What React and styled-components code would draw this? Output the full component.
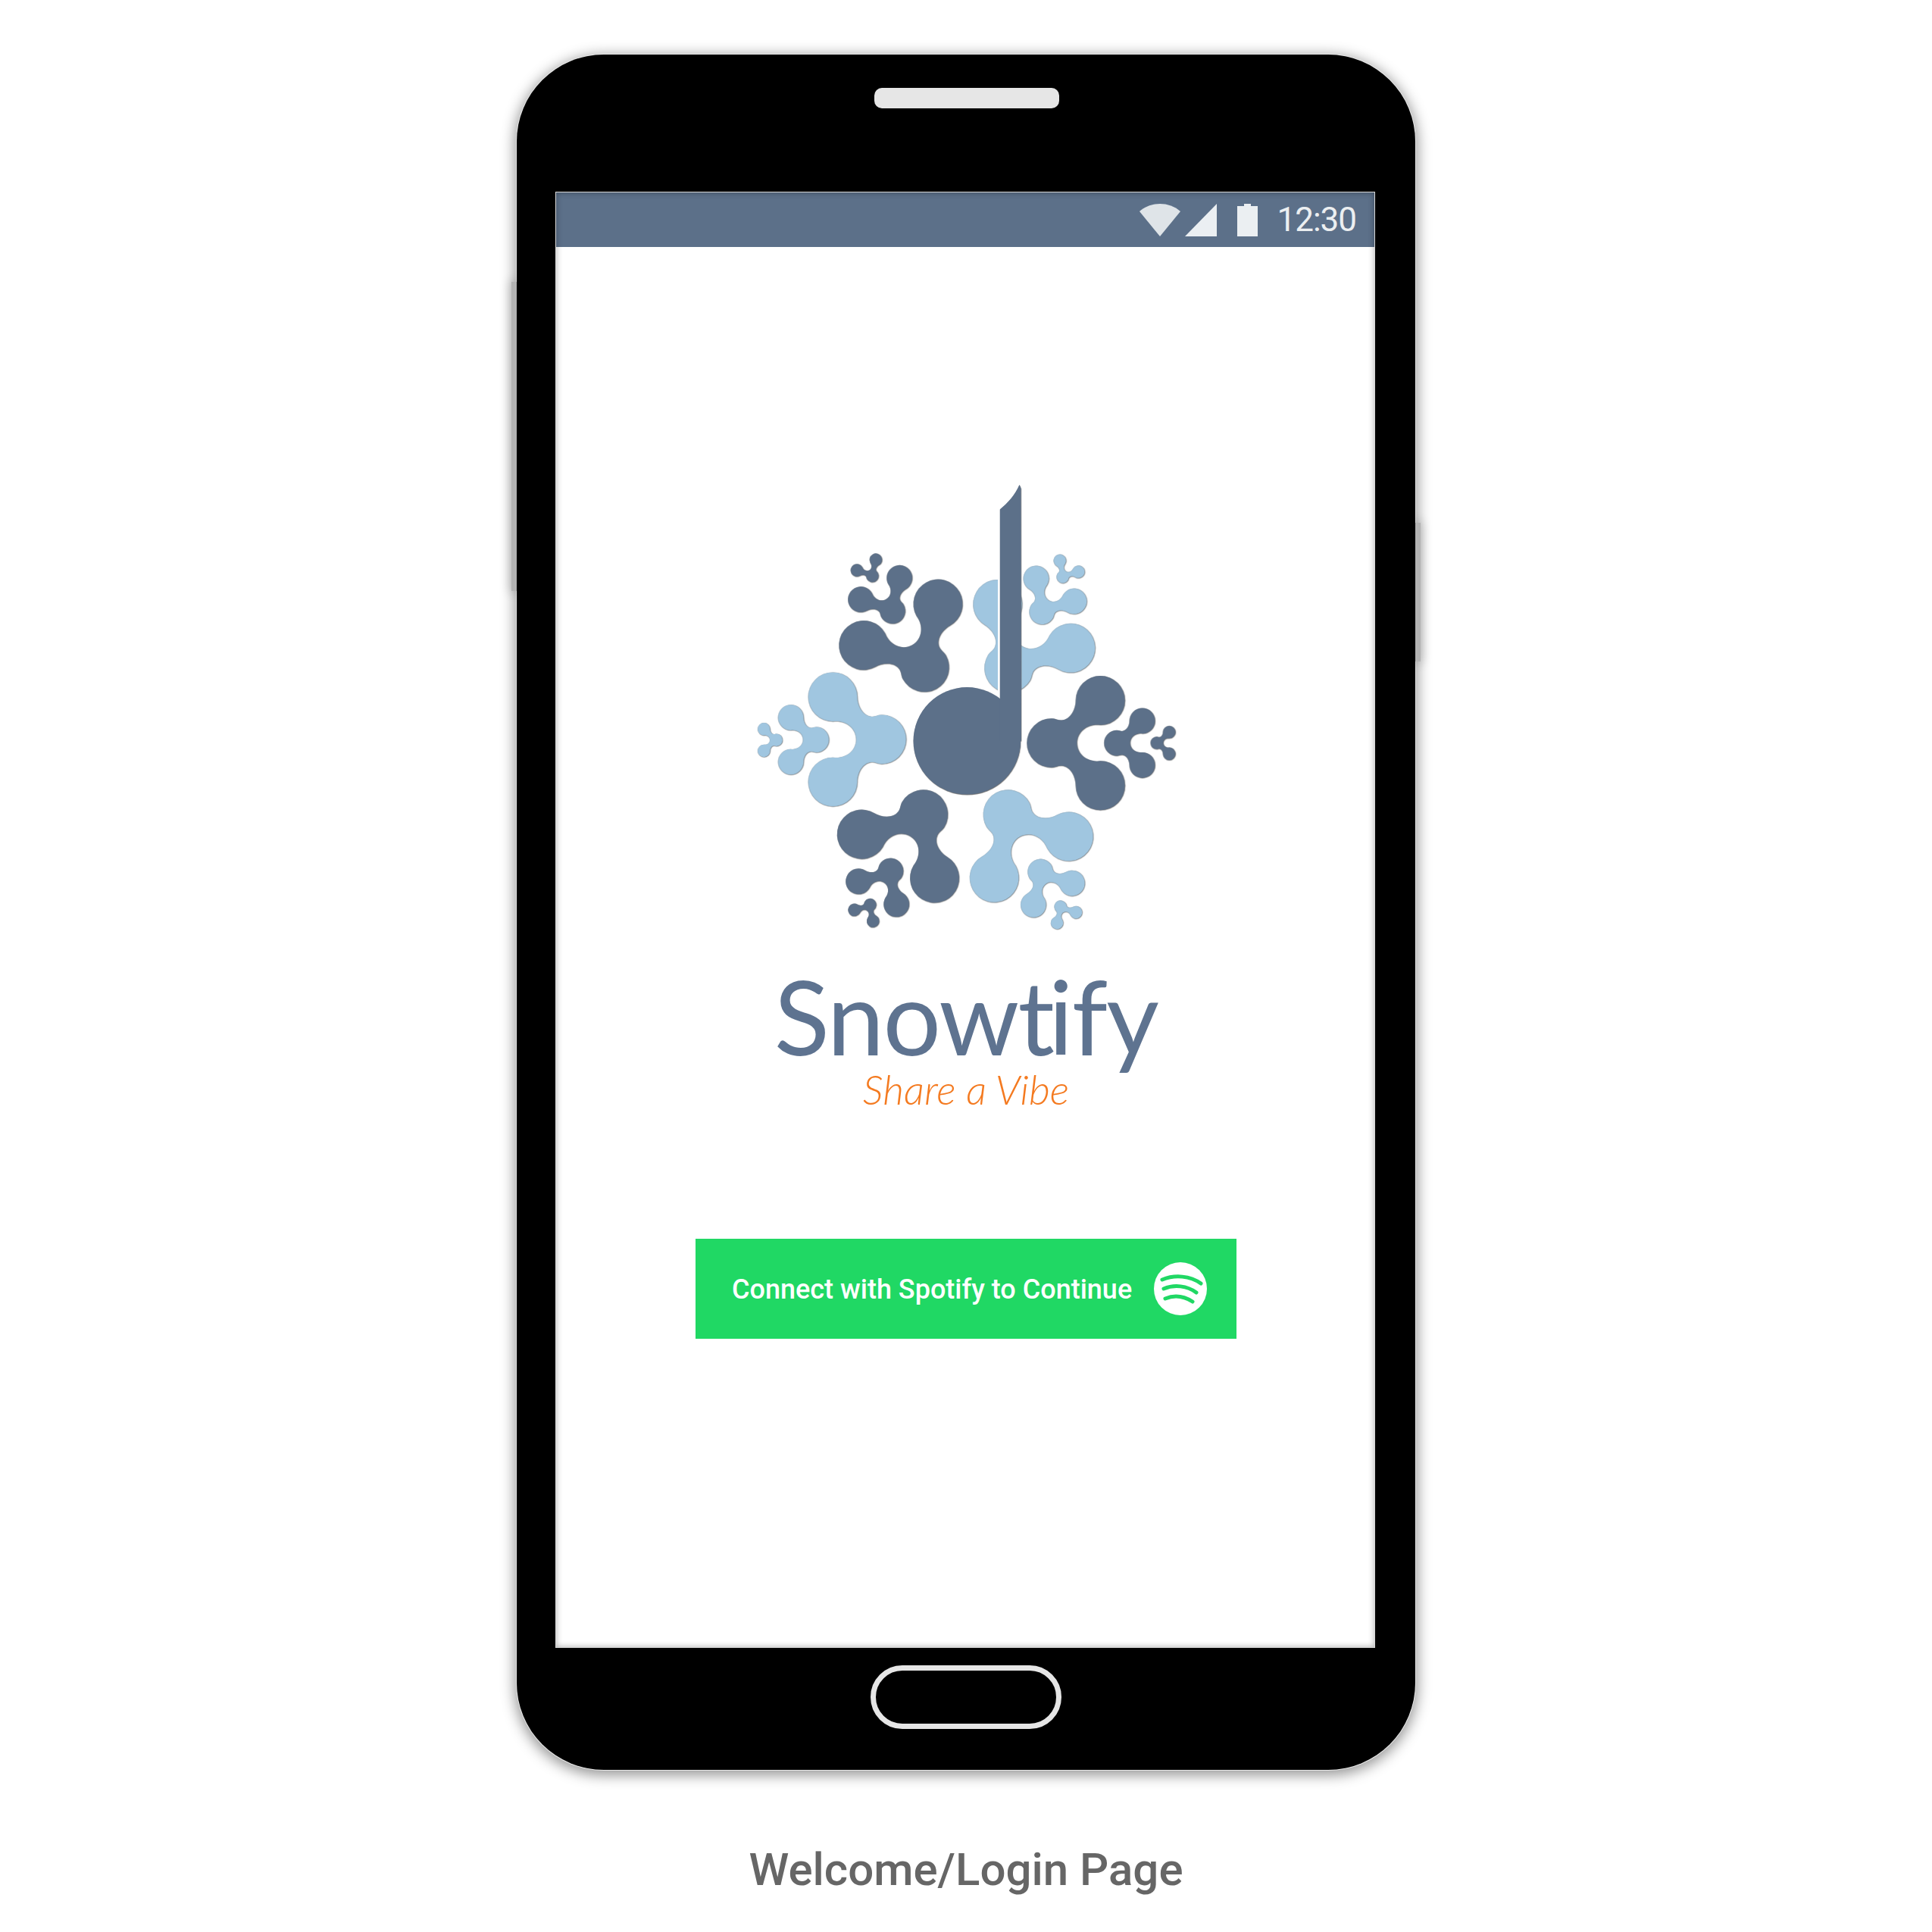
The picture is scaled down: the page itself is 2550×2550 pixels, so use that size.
import styled, { createGlobalStyle } from "styled-components";

const SLATE = "#5c7089";
const SKY = "#a0c6e0";

// one three-lobed blob, lobes on x=0 and the third lobe pointing along +x
const BLOB_PATH =
    "M0 -224 A82 82 0 0 1 82 -142 C82 -115 98 -78 130 -76 C143 -76 150 -82 163 -82 " +
    "A82 82 0 0 1 163 82 C150 82 143 76 130 76 C98 78 82 115 82 142 " +
    "A82 82 0 1 1 0 60 C40 66 78 40 78 0 C78 -40 40 -66 0 -60 A82 82 0 1 1 0 -224 Z";

// x, y = middle of the two outer lobes, in logo units
const arms = [
    { color: SKY, angle: 0, parts: [[352, 900, 1], [212, 901, 0.52], [122, 902, 0.255]] },
    { color: SLATE, angle: 180, parts: [[1245, 912, 1], [1385, 912, 0.52], [1475, 912, 0.255]] },
    { color: SLATE, angle: 61, parts: [[579, 517, 1], [510, 397, 0.52], [464, 318, 0.255]] },
    { color: SKY, angle: 121, parts: [[1024, 522, 1], [1094, 401, 0.52], [1141, 322, 0.255]] },
    { color: SLATE, angle: -59, parts: [[570, 1290, 1], [501, 1412, 0.52], [455, 1488, 0.255]] },
    { color: SKY, angle: -119, parts: [[1015, 1293, 1], [1086, 1416, 0.52], [1132, 1495, 0.255]] },
];

function Logo() {
    return (
        <LogoSvg viewBox="0 0 1568 1568">
            <BlobGroup>
                {arms.map((arm) =>
                    arm.parts.map(([x, y, scale]) => (
                        <path
                            key={`${x}-${y}`}
                            d={BLOB_PATH}
                            fill={arm.color}
                            transform={`translate(${x} ${y}) rotate(${arm.angle}) scale(${scale})`}
                        />
                    ))
                )}
            </BlobGroup>
            <rect x="903" y="120" width="8" height="650" fill="#fff" />
            <NoteGroup>
                <circle cx="800" cy="905" r="179" fill={SLATE} />
                <path
                    d="M910 132 C935 112 960 85 975 50 L980 62 L981 905 L910 905 Z"
                    fill={SLATE}
                />
            </NoteGroup>
        </LogoSvg>
    );
}

function Wifi() {
    return (
        <StatusIcon width="54" height="43" viewBox="0 0 54 43">
            <path d="M27 43 L0 10 C15 -3.3 39 -3.3 54 10 Z" fill="#dfe4e8" />
        </StatusIcon>
    );
}

function Signal() {
    return (
        <StatusIcon width="42" height="43" viewBox="0 0 42 43">
            <path d="M0 43 L42 0 L42 43 Z" fill="#ebeff2" />
        </StatusIcon>
    );
}

function Battery() {
    return (
        <BatteryIcon width="27" height="43" viewBox="0 0 27 43">
            <path d="M0 3 H9 V0 H18 V3 H27 V43 H0 Z" fill="#ebeff2" />
        </BatteryIcon>
    );
}

function SpotifyMark() {
    return (
        <svg width="70" height="70" viewBox="0 0 70 70">
            <circle cx="35" cy="35" r="35" fill="#fff" />
            <g fill="none" stroke="#20d864" strokeWidth="5" strokeLinecap="round">
                <path d="M11 23 C28 16 48 18 62 28" />
                <path d="M13 35 C27 29 44 31 56 40" />
                <path d="M15 48 C27 43 40 45 51 52" />
            </g>
        </svg>
    );
}

export default function App() {
    return (
        <>
            <GlobalStyle />
            <Page>
                <Phone>
                    <SideKey $side="left" />
                    <SideKey $side="right" />
                    <Speaker />
                    <Screen>
                        <StatusBar>
                            <Wifi />
                            <Signal />
                            <Battery />
                            <Clock>12:30</Clock>
                        </StatusBar>
                        <Welcome>
                            <Logo />
                            <Brand>Snow<TightLetter>t</TightLetter>ify</Brand>
                            <Tagline>Share a Vibe</Tagline>
                            <ConnectButton>
                                <ConnectLabel>Connect with Spotify to Continue</ConnectLabel>
                                <SpotifyMark />
                            </ConnectButton>
                        </Welcome>
                    </Screen>
                    <HomeButton />
                </Phone>
                <Caption>Welcome/Login Page</Caption>
            </Page>
        </>
    );
}

const GlobalStyle = createGlobalStyle`
    html, body {
        margin: 0;
        padding: 0;
        background: #fff;
    }
`;

const Page = styled.main`
    width: 2550px;
    height: 2550px;
    padding-top: 72px;
    box-sizing: border-box;
    background: #fff;
    display: flex;
    flex-direction: column;
    align-items: center;
    font-family: "Roboto", "Liberation Sans", sans-serif;
`;

const Phone = styled.div`
    position: relative;
    width: 1186px;
    height: 2264px;
    box-sizing: border-box;
    padding-top: 44px;
    border-radius: 115px;
    background: #000;
    box-shadow: 0 0 0 1px #e8e8e8, 0 4px 18px 3px rgba(0, 0, 0, 0.42);
    display: flex;
    flex-direction: column;
    align-items: center;
`;

const SideKey = styled.div`
    position: absolute;
    width: 7px;
    background: #b3b3b3;
    box-shadow: 0 0 14px 2px rgba(0, 0, 0, 0.2);
    ${(props) =>
        props.$side === "left"
            ? "left: -7px; top: 300px; height: 408px;"
            : "right: -7px; top: 618px; height: 183px;"}
`;

const Speaker = styled.div`
    width: 244px;
    height: 27px;
    flex: none;
    border-radius: 10px;
    background: #e6e6e6;
    margin: 0 0 111px 2px;
`;

const Screen = styled.section`
    position: relative;
    width: 1080px;
    height: 1920px;
    flex: none;
    margin-left: -2px;
    background: #fff;
    outline: 1px solid #d8d8d8;
    display: flex;
    flex-direction: column;

    &::after {
        content: "";
        position: absolute;
        inset: 0;
        pointer-events: none;
        box-shadow: inset 0 0 9px rgba(0, 0, 0, 0.32);
    }
`;

const StatusBar = styled.div`
    height: 72px;
    flex: none;
    background: ${SLATE};
    display: flex;
    align-items: center;
    padding-right: 24px;
    justify-content: flex-end;
`;

const StatusIcon = styled.svg`
    flex: none;
    margin-right: 6px;
    margin-top: 14px;
    margin-bottom: 13px;
`;

const BatteryIcon = styled(StatusIcon)`
    margin-left: 21px;
    margin-right: 25px;
`;

const Clock = styled.span`
    color: #eceff1;
    font-size: 44px;
    line-height: 72px;
    font-weight: 400;
    letter-spacing: -1px;
`;

const Welcome = styled.div`
    flex: 1;
    padding-left: 2px;
    display: flex;
    flex-direction: column;
    align-items: center;
`;

const LogoSvg = styled.svg`
    width: 620px;
    height: 620px;
    flex: none;
    margin-top: 294px;
    margin-left: -10px;
`;

const BlobGroup = styled.g`
    filter: drop-shadow(1px 1px 0.4px #5a5a5a);
`;

const NoteGroup = styled.g`
    filter: drop-shadow(1px 2px 0.5px #666);
`;

const Brand = styled.h1`
    margin: 36px 0 0;
    font-family: "Lato", "Liberation Sans", sans-serif;
    font-weight: 400;
    font-size: 135px;
    line-height: 130px;
    letter-spacing: -1.7px;
    color: #5e7390;
`;

const TightLetter = styled.span`
    letter-spacing: -8px;
`;

const Tagline = styled.p`
    margin: 0;
    font-family: "Lato", "Liberation Sans", sans-serif;
    font-style: italic;
    font-weight: 300;
    font-size: 54px;
    line-height: 64px;
    color: #f47a20;
`;

const ConnectButton = styled.button`
    width: 714px;
    height: 132px;
    flex: none;
    margin-top: 165px;
    border: none;
    padding: 0 39px 0 48px;
    box-sizing: border-box;
    background: #20d864;
    color: #fff;
    display: flex;
    align-items: center;
    justify-content: space-between;
    font-family: "Roboto", "Liberation Sans", sans-serif;
    font-size: 36px;
    font-weight: 500;
`;

const ConnectLabel = styled.span`
    margin-top: 2px;
`;

const HomeButton = styled.div`
    width: 252px;
    height: 84px;
    flex: none;
    box-sizing: border-box;
    margin-top: 24px;
    border: 7px solid #e6e6e6;
    border-radius: 42px;
`;

const Caption = styled.p`
    margin: 96px 0 0;
    font-size: 60px;
    line-height: 72px;
    font-weight: 500;
    color: #666;
`;
